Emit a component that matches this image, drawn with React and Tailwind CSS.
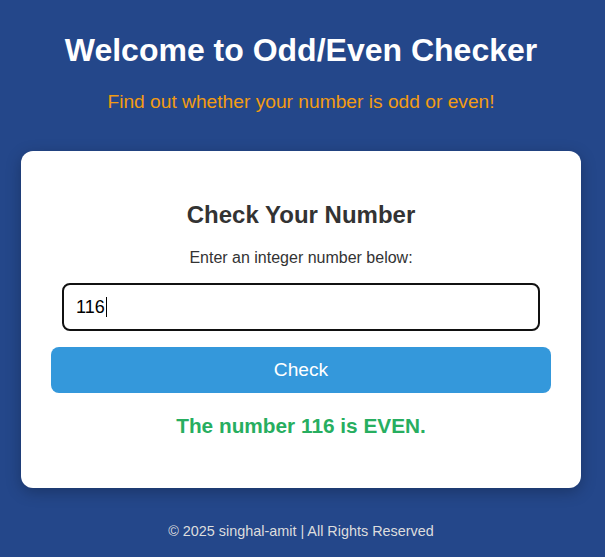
export default function App() {
  return (
    <div className="min-h-[557px] bg-[#24478a] font-['Liberation_Sans',Arial,sans-serif] flex flex-col items-center pr-[3px]">
      <h1 className="mt-[31px] text-[32px] leading-[38px] font-bold text-white">Welcome to Odd/Even Checker</h1>
      <p className="mt-[22px] text-[19.2px] leading-[22px] text-[#f39c12]">Find out whether your number is odd or even!</p>

      <div className="mt-[38px] w-[560px] rounded-xl bg-white px-[30px] pt-[50px] pb-[50px] shadow-[0_4px_15px_rgba(0,0,0,0.25)] flex flex-col items-center">
        <h2 className="text-[24px] leading-[28px] font-bold text-[#333]">Check Your Number</h2>
        <label className="mt-[20px] text-[16px] leading-[18px] text-[#333]">Enter an integer number below:</label>
        <div className="mt-[16px] w-[478px] h-[48px] rounded-lg border-2 border-[#111] flex items-center px-[12px] text-[18px] text-black">
          <span>116</span>
          <span className="ml-px h-[20px] w-px bg-black" />
        </div>
        <button className="mt-[16px] w-[500px] h-[46px] rounded-lg bg-[#3498db] text-white text-[19.2px]">Check</button>
        <p className="mt-[21px] text-[20.8px] leading-[24px] font-bold text-[#27ae60]">The number 116 is EVEN.</p>
      </div>

      <footer className="mt-[35px] text-[14.4px] leading-[17px] text-[#ddd]">© 2025 singhal-amit | All Rights Reserved</footer>
    </div>
  );
}
